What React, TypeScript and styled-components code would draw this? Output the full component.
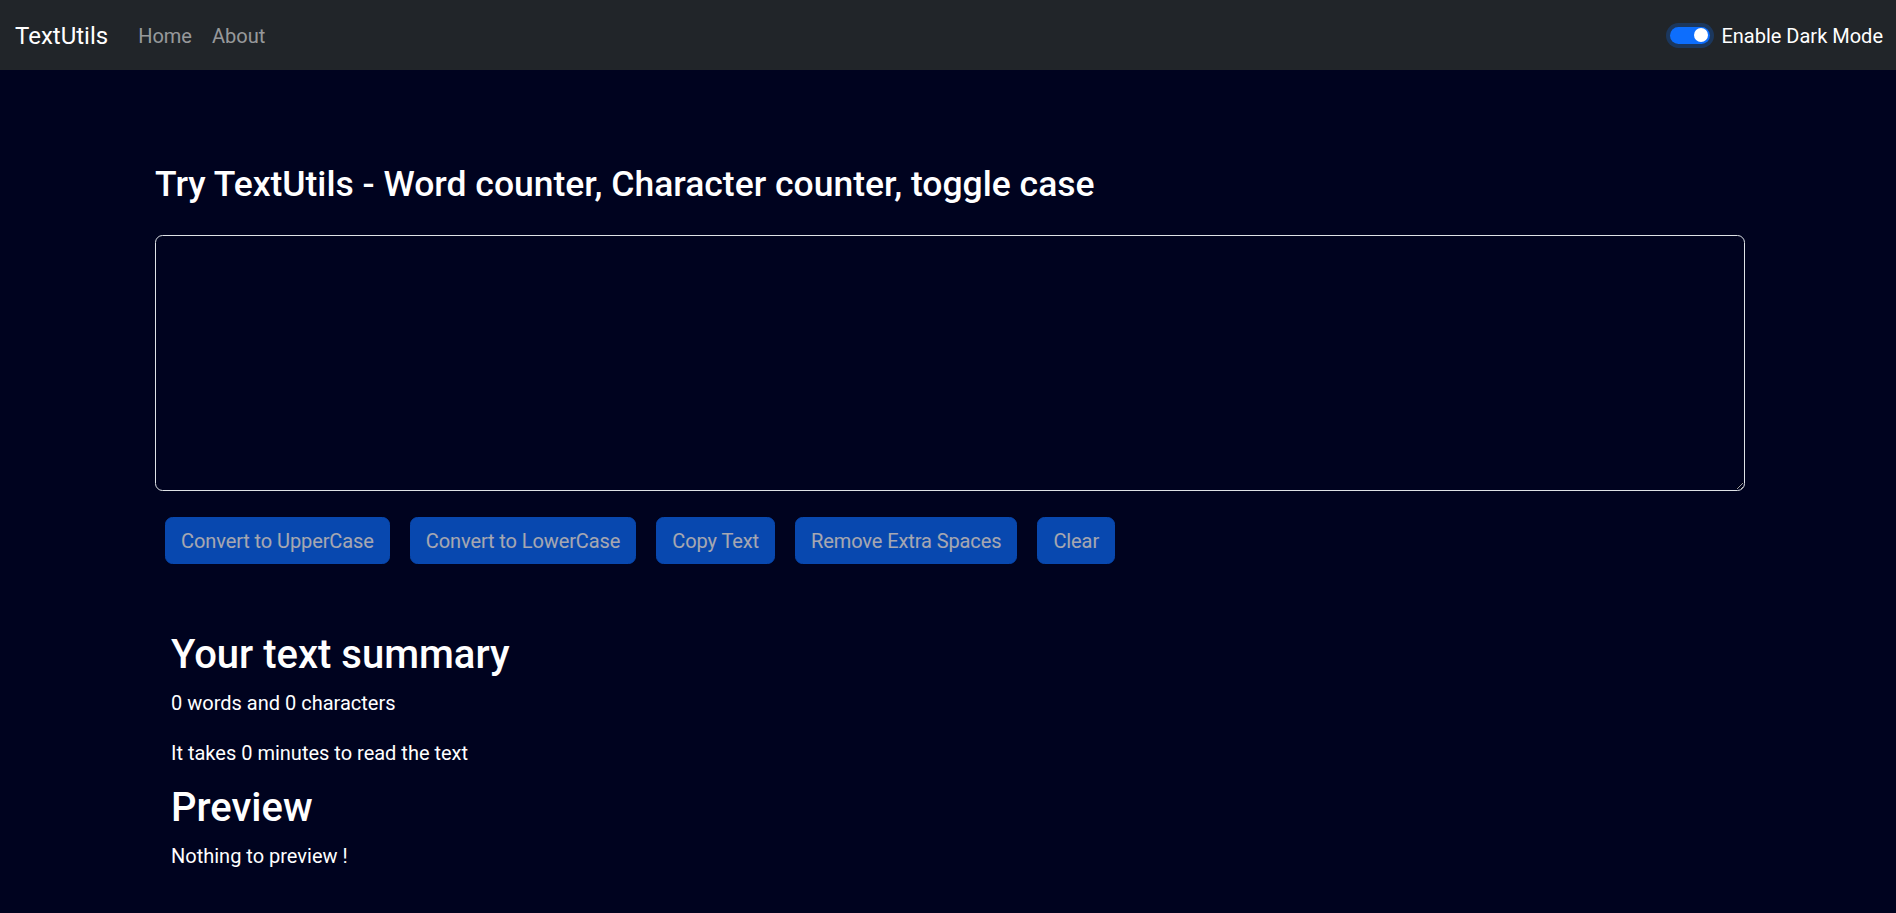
import React, { useState } from "react";
import styled, { createGlobalStyle } from "styled-components";

const GlobalStyle = createGlobalStyle`
  *, *::before, *::after { box-sizing: border-box; }
  body {
    margin: 0;
    background: #00031f;
    color: #fff;
    font-family: Roboto, "Liberation Sans", sans-serif;
    font-size: 20px;
    line-height: 1.5;
  }
`;

const Nav = styled.nav`
  height: 70px;
  background: #212529;
  display: flex;
  align-items: center;
  padding: 0 13px 0 15px;
`;

const Brand = styled.a`
  font-size: 24px;
  line-height: 30px;
  padding-top: 2px;
  color: #fff;
  text-decoration: none;
  margin-right: 20px;
`;

const NavLinks = styled.div`
  display: flex;
  align-items: center;
  flex: 1;
`;

const NavLink = styled.a`
  font-size: 20px;
  line-height: 30px;
  padding: 2px 10px 0;
  color: rgba(255, 255, 255, 0.55);
  text-decoration: none;
`;

const SwitchWrap = styled.label`
  display: flex;
  align-items: center;
  gap: 11px;
  cursor: pointer;
`;

const SwitchTrack = styled.span<{ $on: boolean }>`
  position: relative;
  width: 40px;
  height: 17px;
  border-radius: 9px;
  background: ${(p) => (p.$on ? "#0d6efd" : "transparent")};
  box-shadow: 0 0 0 4px rgba(13, 110, 253, 0.25);
  flex-shrink: 0;
`;

const SwitchKnob = styled.span<{ $on: boolean }>`
  position: absolute;
  top: 1.5px;
  left: ${(p) => (p.$on ? "24px" : "2px")};
  width: 14px;
  height: 14px;
  border-radius: 50%;
  background: #fff;
`;

const SwitchLabel = styled.span`
  font-size: 20px;
  line-height: 30px;
  padding-top: 2px;
  color: #fff;
`;

const Main = styled.main`
  width: 1590px;
  margin-left: 155px;
  padding-top: 93px;
  padding-bottom: 40px;
`;

const Heading = styled.h1`
  margin: 0 0 30px;
  font-size: 35.5px;
  font-weight: 500;
  line-height: 42px;
  color: #fff;
`;

const TextArea = styled.textarea`
  display: block;
  width: 100%;
  height: 256px;
  margin: 0 0 21px;
  padding: 7.5px 15px;
  border: 1px solid #dee2e6;
  border-radius: 7.5px;
  background: transparent;
  color: #fff;
  font: inherit;
  color-scheme: dark;
  outline: none;
`;

const ButtonRow = styled.div`
  display: flex;
  flex-wrap: wrap;
  gap: 20px;
  padding: 5px 10px;
`;

const Button = styled.button`
  padding: 7.5px 15px;
  font-family: inherit;
  font-size: 20px;
  line-height: 30px;
  letter-spacing: -0.1px;
  color: #fff;
  background: #0d6efd;
  border: 1px solid #0d6efd;
  border-radius: 7.5px;
  opacity: 0.65;
  &:disabled { cursor: default; }
`;

const Summary = styled.section`
  padding: 62px 16px 0;
`;

const SubHeading = styled.h2`
  margin: 0 0 9px;
  font-size: 40px;
  font-weight: 500;
  line-height: 48px;
  color: #fff;
`;

const Para = styled.p<{ $tight?: boolean }>`
  margin: 0 0 ${(p) => (p.$tight ? "16px" : "20px")};
  font-size: 20px;
  line-height: 30px;
`;

export default function App() {
  const [text, setText] = useState("");
  const [dark, setDark] = useState(true);
  const words = text.split(/\s+/).filter((w) => w.length > 0).length;
  const empty = text.length === 0;

  return (
    <>
      <GlobalStyle />
      <Nav>
        <Brand href="#">TextUtils</Brand>
        <NavLinks>
          <NavLink href="#">Home</NavLink>
          <NavLink href="#">About</NavLink>
        </NavLinks>
        <SwitchWrap onClick={() => setDark(!dark)}>
          <SwitchTrack $on={dark}>
            <SwitchKnob $on={dark} />
          </SwitchTrack>
          <SwitchLabel>Enable Dark Mode</SwitchLabel>
        </SwitchWrap>
      </Nav>
      <Main>
        <Heading>Try TextUtils - Word counter, Character counter, toggle case</Heading>
        <TextArea value={text} onChange={(e) => setText(e.target.value)} />
        <ButtonRow>
          <Button disabled={empty}>Convert to UpperCase</Button>
          <Button disabled={empty}>Convert to LowerCase</Button>
          <Button disabled={empty}>Copy Text</Button>
          <Button disabled={empty}>Remove Extra Spaces</Button>
          <Button disabled={empty}>Clear</Button>
        </ButtonRow>
        <Summary>
          <SubHeading>Your text summary</SubHeading>
          <Para>{words} words and {text.length} characters</Para>
          <Para $tight>It takes {0.008 * words} minutes to read the text</Para>
          <SubHeading>Preview</SubHeading>
          <Para>{empty ? "Nothing to preview !" : text}</Para>
        </Summary>
      </Main>
    </>
  );
}
